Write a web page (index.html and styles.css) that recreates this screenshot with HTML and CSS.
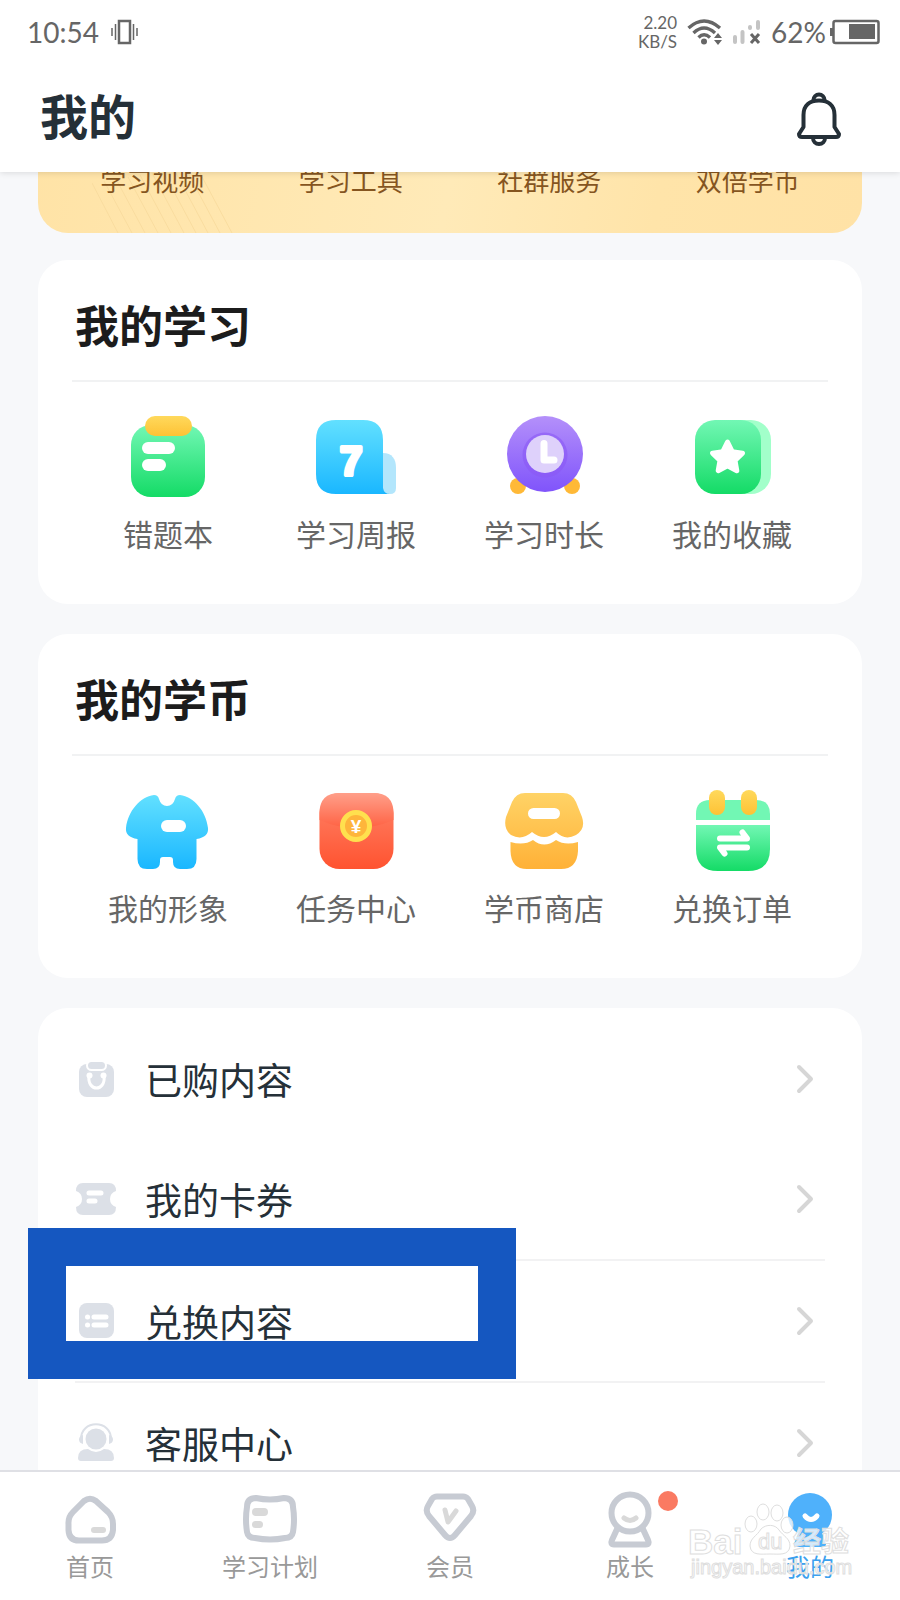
FILE: index.html
```html
<!DOCTYPE html>
<html lang="zh-CN">
<head>
<meta charset="utf-8">
<meta name="viewport" content="width=device-width, initial-scale=1">
<title>我的</title>
<link rel="stylesheet" href="styles.css">
</head>
<body>
<svg class="defs" aria-hidden="true">
  <defs>
    <linearGradient id="green" x1="0" y1="0" x2="0" y2="1"><stop offset="0" stop-color="#72f7b4"/><stop offset="1" stop-color="#14db66"/></linearGradient>
    <linearGradient id="blue" x1="0" y1="0" x2="0" y2="1"><stop offset="0" stop-color="#62e0ff"/><stop offset="1" stop-color="#1ab7ff"/></linearGradient>
    <linearGradient id="purple" x1="0" y1="0" x2="0" y2="1"><stop offset="0" stop-color="#b490fa"/><stop offset="1" stop-color="#8054fb"/></linearGradient>
    <linearGradient id="yellow" x1="0" y1="0" x2="0" y2="1"><stop offset="0" stop-color="#ffd95c"/><stop offset="1" stop-color="#fdc235"/></linearGradient>
    <linearGradient id="red" x1="0" y1="0" x2="0" y2="1"><stop offset="0" stop-color="#ff8469"/><stop offset="1" stop-color="#ff5330"/></linearGradient>
    <linearGradient id="flap" x1="0" y1="0" x2="0" y2="1"><stop offset="0" stop-color="#ff9f8a"/><stop offset="1" stop-color="#ff6243"/></linearGradient>
    <linearGradient id="amber" gradientUnits="userSpaceOnUse" x1="0" y1="11" x2="0" y2="87"><stop offset="0" stop-color="#ffd366"/><stop offset="1" stop-color="#ffb137"/></linearGradient>
  </defs>
</svg>

<header class="header">
  <div class="status">
    <span class="status-time">10:54</span>
    <svg class="vibrate" width="28" height="26" viewBox="0 0 28 26" fill="none" stroke="#666" aria-hidden="true"><rect x="8" y="2" width="11" height="22" stroke-width="2.500"/><path d="M4.500 5v16M22.500 5v16" stroke-width="1.500"/><path d="M1 9v8M26 9v8" stroke-width="1.500"/></svg>
    <span class="status-speed">2.20<br>KB/S</span>
    <svg class="wifi" width="36" height="26" viewBox="0 0 36 26" fill="none" stroke="#666" stroke-width="3.400" aria-hidden="true"><path d="M1.500 9Q17 -5 33 9M6.500 14Q17 4 28 14M11.500 18.500Q17 13 23 18.500"/><circle cx="17" cy="22.500" r="3" fill="#666" stroke="none"/><path d="M31 14l4 5h-8zM31 26l4-5h-8z" fill="#666" stroke="none"/></svg>
    <svg class="signal" width="28" height="26" viewBox="0 0 28 26" aria-hidden="true"><g stroke="#c4c4c4" stroke-width="4" stroke-linecap="round"><path d="M2 18v5M9.500 13v10M17 8v1M25 3v6"/></g><path d="M18 15l8 9M26 15l-8 9" stroke="#666" stroke-width="3"/></svg>
    <span class="status-percent">62%</span>
    <svg class="battery" width="50" height="26" viewBox="0 0 50 26" aria-hidden="true"><rect x="3.500" y="2" width="45" height="22" rx="2" fill="none" stroke="#666" stroke-width="2.500"/><path d="M0 9h3v8H0zM19 5h26v15H19z" fill="#666"/></svg>
  </div>
  <div class="titlebar">
    <h1 class="title">我的</h1>
    <button class="bell" type="button" aria-label="通知">
      <svg width="60" height="60" viewBox="0 0 60 60" fill="none" stroke="#253038" stroke-width="4" stroke-linejoin="round" aria-hidden="true"><path d="M14.500 38V26C14.500 16 21 11.500 30 11.500S45.500 16 45.500 26V38L50 45Q50 48 47 48H13Q10 48 10 45Z"/><path d="M24.500 11a5.500 5.500 0 0 1 11 0M24 49a6 6 0 0 0 12 0"/></svg>
    </button>
  </div>
</header>

<main class="content">
  <section class="vip">
    <svg class="vip-lines" width="160" height="60" viewBox="0 0 160 60" fill="none" stroke="#f9dc9f" aria-hidden="true"><path d="M0 10l26 50M12 8l28 52M24 6l29 54M36 4l30 56M48 2l31 58M60 0l32 60M72 0l32 60M84 0l32 60M96 0l32 60M108 0l32 60"/></svg>
    <span>学习视频</span><span>学习工具</span><span>社群服务</span><span>双倍学币</span>
  </section>

  <section class="card">
    <h2 class="card-title">我的学习</h2>
    <div class="grid">
      <a class="entry" href="#mistakes">
        <svg width="96" height="96" viewBox="0 0 96 96" aria-hidden="true"><rect x="11" y="17" width="74" height="72" rx="20" fill="url(#green)"/><rect x="25" y="8" width="47" height="20" rx="10" fill="url(#yellow)"/><rect x="22" y="34" width="33" height="12" rx="6" fill="#fff"/><rect x="22" y="51" width="24" height="12" rx="6" fill="#fff"/></svg>
        <span>错题本</span>
      </a>
      <a class="entry" href="#weekly">
        <svg width="96" height="96" viewBox="0 0 96 96" aria-hidden="true"><path d="M75 86V45C84 45 88 51 88 60V80Q88 86 82 86Z" fill="#b3e6fc"/><path d="M28 12H55Q75 12 75 32V80Q76 86 82 86H28Q8 86 8 66V32Q8 12 28 12Z" fill="url(#blue)"/><text x="43" y="67" text-anchor="middle" class="digit">7</text></svg>
        <span>学习周报</span>
      </a>
      <a class="entry" href="#duration">
        <svg width="96" height="96" viewBox="0 0 96 96" aria-hidden="true"><circle cx="22" cy="78" r="8" fill="#ffb937"/><circle cx="76" cy="78" r="8" fill="#ffb937"/><circle cx="49" cy="46" r="38" fill="url(#purple)"/><circle cx="49" cy="47" r="22.500" fill="#8a58f5" opacity=".6"/><circle cx="49" cy="46" r="19" fill="#ded1fb"/><path d="M48 35.500V52H58" fill="none" stroke="#fff" stroke-width="7" stroke-linecap="round" stroke-linejoin="round"/></svg>
        <span>学习时长</span>
      </a>
      <a class="entry" href="#favorites">
        <svg width="96" height="96" viewBox="0 0 96 96" aria-hidden="true"><rect x="21" y="12" width="66" height="74" rx="20" fill="#a2ffca"/><rect x="11" y="12" width="66" height="74" rx="20" fill="url(#green)"/><path d="M43.500 34l4.700 9.600 10.300 1.500-7.500 7.300 1.800 10.300-9.300-4.900-9.300 4.900 1.800-10.300-7.500-7.300 10.300-1.500z" fill="#fff" stroke="#fff" stroke-width="5" stroke-linejoin="round"/></svg>
        <span>我的收藏</span>
      </a>
    </div>
  </section>

  <section class="card">
    <h2 class="card-title">我的学币</h2>
    <div class="grid">
      <a class="entry" href="#avatar">
        <svg width="96" height="96" viewBox="0 0 96 96" aria-hidden="true"><path d="M34 13Q38 13 39 17Q41 24 47 24T55 17Q56 13 60 13C74 15 86 29 88 46Q89 55 76.500 57V77Q76.500 87 67 87H60Q53 87 53 80V78Q53 75 50 75H43Q40 75 40 78V80Q40 87 33 87H27Q17.500 87 17.500 77V57Q5 55 6 46C8 29 20 15 34 13Z" fill="url(#blue)"/><rect x="41" y="38" width="25" height="12" rx="6" fill="#fff"/></svg>
        <span>我的形象</span>
      </a>
      <a class="entry" href="#tasks">
        <svg width="96" height="96" viewBox="0 0 96 96" aria-hidden="true"><rect x="11.500" y="11" width="74" height="76" rx="20" fill="url(#red)"/><path d="M11.500 38V31Q11.500 11 31.500 11H65.500Q85.500 11 85.500 31V38Q48 54 11.500 38Z" fill="url(#flap)"/><circle cx="48" cy="44" r="13.500" fill="#feb53b" stroke="#ffe04e" stroke-width="5"/><text x="48" y="51" text-anchor="middle" class="yen">¥</text></svg>
        <span>任务中心</span>
      </a>
      <a class="entry" href="#shop">
        <svg width="96" height="96" viewBox="0 0 96 96" aria-hidden="true"><path d="M29 11H67Q76 11 80 20L86 35Q90 47 80 53Q69 59 60 50Q48 60 36 50Q26 59 15 53Q7 47 10 35L16 20Q20 11 29 11Z" fill="url(#amber)"/><path d="M14.500 60Q28 64 37 58Q48 67 60 58Q69 64 82 60V69Q81 87 65 87H31Q15 87 14.500 69Z" fill="url(#amber)"/><rect x="32" y="26" width="32" height="11" rx="5.500" fill="#fff"/></svg>
        <span>学币商店</span>
      </a>
      <a class="entry" href="#orders">
        <svg width="96" height="96" viewBox="0 0 96 96" aria-hidden="true"><path d="M12 38V32Q12 18 26 18H72Q86 18 86 32V38Z" fill="#72f7b4"/><path d="M12 43H86V67Q86 89 64 89H34Q12 89 12 67Z" fill="url(#green)"/><rect x="25" y="8" width="16" height="25" rx="8" fill="url(#yellow)"/><rect x="57" y="8" width="16" height="25" rx="8" fill="url(#yellow)"/><path d="M36 56.500H63L58.500 50.500M63 65.500H36L40.500 71.500" fill="none" stroke="#fff" stroke-width="6" stroke-linecap="round" stroke-linejoin="round"/></svg>
        <span>兑换订单</span>
      </a>
    </div>
  </section>

  <nav class="card list" aria-label="更多服务">
    <a class="row" href="#purchased">
      <svg width="42" height="42" viewBox="0 0 42 42" aria-hidden="true"><rect x="4" y="6" width="35" height="33" rx="8" fill="#dce0e7"/><rect x="12" y="3" width="19" height="9" rx="4.500" fill="#dce0e7" stroke="#fff" stroke-width="2"/><path d="M14 18C12 34 31 34 29 18" fill="none" stroke="#fff" stroke-width="3"/><circle cx="14.500" cy="17.500" r="3" fill="#fff"/><circle cx="28.500" cy="17.500" r="3" fill="#fff"/></svg>
      <span>已购内容</span>
      <svg class="chevron" width="18" height="30" viewBox="0 0 18 30" aria-hidden="true"><path d="M3 3L15 15L3 27"/></svg>
    </a>
    <a class="row ruled" href="#coupons">
      <svg width="42" height="42" viewBox="0 0 42 42" aria-hidden="true"><path d="M8 5H34Q41 5 41 13Q35 15 35 21T41 29Q41 37 34 37H8Q1 37 1 29Q7 27 7 21T1 13Q1 5 8 5Z" fill="#dce0e7"/><path d="M14 15H26M14 23H20" stroke="#fff" stroke-width="5" stroke-linecap="round"/></svg>
      <span>我的卡券</span>
      <svg class="chevron" width="18" height="30" viewBox="0 0 18 30" aria-hidden="true"><path d="M3 3L15 15L3 27"/></svg>
    </a>
    <a class="row ruled marked" href="#redeem">
      <svg width="42" height="42" viewBox="0 0 42 42" aria-hidden="true"><rect x="4" y="3" width="35" height="35" rx="8" fill="#dce0e7"/><path d="M19 17H31M19 25H31M12.500 17h.1M12.500 25h.1" stroke="#fff" stroke-width="5" stroke-linecap="round"/></svg>
      <span>兑换内容</span>
      <svg class="chevron" width="18" height="30" viewBox="0 0 18 30" aria-hidden="true"><path d="M3 3L15 15L3 27"/></svg>
    </a>
    <a class="row" href="#support">
      <svg width="42" height="42" viewBox="0 0 42 42" aria-hidden="true"><circle cx="21" cy="17" r="10.500" fill="#dce0e7"/><path d="M6 18C5 -3 37 -3 36 18" fill="none" stroke="#dce0e7" stroke-width="2"/><path d="M8 13v9Q4 21 4 17.500T8 13ZM34 13v9Q38 21 38 17.500T34 13ZM3 36Q3 27 13 27Q21 33 29 27Q39 27 39 36Q39 39 36 39H6Q3 39 3 36Z" fill="#dce0e7"/></svg>
      <span>客服中心</span>
      <svg class="chevron" width="18" height="30" viewBox="0 0 18 30" aria-hidden="true"><path d="M3 3L15 15L3 27"/></svg>
    </a>
  </nav>
</main>

<footer class="footer">
  <nav class="tabs" aria-label="主导航">
    <a class="tab" href="#home">
      <svg width="60" height="60" viewBox="0 0 60 60" fill="none" aria-hidden="true"><path d="M24 11Q30 6.500 36 11L48 22Q53 27 53 34V40Q52 50.500 42 50.500H19Q9 50.500 8.500 40V34Q8 27 13 22Z" stroke="#c7cbd3" stroke-width="6"/><rect x="31" y="37" width="15" height="6" rx="3" fill="#d9d9d9"/></svg>
      <span>首页</span>
    </a>
    <a class="tab" href="#plan">
      <svg width="60" height="60" viewBox="0 0 60 60" fill="none" aria-hidden="true"><path d="M16 8Q30 11 44 8Q53 8 53 17Q55 29 53 42Q52 48 45 48Q30 51 15 48Q8 48 7 42Q5 29 7 17Q7 8 16 8Z" stroke="#c7cbd3" stroke-width="6"/><rect x="12" y="18" width="16" height="8" rx="4" fill="#d9d9d9"/><rect x="12" y="31" width="11" height="7" rx="3.500" fill="#d9d9d9"/></svg>
      <span>学习计划</span>
    </a>
    <a class="tab" href="#member">
      <svg width="60" height="60" viewBox="0 0 60 60" fill="none" aria-hidden="true"><path d="M17 6.500H43Q46 6.500 48 9L52 16Q55 21 51 26L35 45Q30 51 25 45L9 26Q5 21 8 16L12 9Q14 6.500 17 6.500Z" stroke="#c7cbd3" stroke-width="6"/><path d="M25 20L28 32L36 21" stroke="#d9d9d9" stroke-width="5" stroke-linecap="round" stroke-linejoin="round"/></svg>
      <span>会员</span>
    </a>
    <a class="tab" href="#growth">
      <span class="tab-icon">
        <svg width="60" height="60" viewBox="0 0 60 60" fill="none" aria-hidden="true"><path d="M18 37L12 50Q10 54.500 14 54.500H46Q50 54.500 48 50L42 37" stroke="#c7cbd3" stroke-width="6"/><circle cx="30" cy="23" r="18.500" stroke="#c7cbd3" stroke-width="6"/><path d="M24 28Q30 33 36 28" stroke="#d9d9d9" stroke-width="5" stroke-linecap="round"/></svg>
        <i class="dot"></i>
      </span>
      <span>成长</span>
    </a>
    <a class="tab active" href="#me" aria-current="page">
      <svg width="60" height="60" viewBox="0 0 60 60" aria-hidden="true"><path d="M19 40H41L46 54Q46 57 43 57H17Q14 57 14 54Z" fill="#4fb1fb"/><circle cx="30" cy="25" r="22" fill="#4fb1fb"/><path d="M25 26Q31 33 37 26" fill="none" stroke="#fff" stroke-width="5" stroke-linecap="round"/></svg>
      <span>我的</span>
    </a>
  </nav>
  <svg class="watermark" width="170" height="84" viewBox="0 0 170 84" role="img" aria-label="Baidu 经验">
    <text x="2" y="54" class="wm-brand">Bai</text>
    <ellipse cx="65" cy="24" rx="6" ry="8"/><ellipse cx="77" cy="12" rx="6" ry="8"/><ellipse cx="91" cy="13" rx="6" ry="8"/><ellipse cx="101" cy="25" rx="6" ry="8"/>
    <path d="M75 29C80 24 89 24 93 30C97 36 104 38 104 46C103 56 93 54 84 54S65 56 64 46C64 38 71 36 75 29Z"/>
    <text x="72" y="49" class="wm-du">du</text>
    <text x="107" y="52" class="wm-cn">经验</text>
    <text x="5" y="74" class="wm-url">jingyan.baidu.com</text>
  </svg>
</footer>
</body>
</html>
```
FILE: styles.css
```css
*,
*::before,
*::after {
  box-sizing: border-box;
}

body {
  margin: 0;
  height: 100vh;
  display: flex;
  flex-direction: column;
  background: #f7f8fa;
  color: #253038;
  font-family: "Liberation Sans", "Noto Sans CJK SC", sans-serif;
}

a {
  color: inherit;
  text-decoration: none;
}

svg {
  display: block;
  flex: none;
}

.defs {
  position: absolute;
  width: 0;
  height: 0;
}

/* Header */
.header {
  position: relative;
  z-index: 1;
  flex: none;
  padding-bottom: 22px;
  background: #fff;
  box-shadow: 0 1px 6px rgba(0, 0, 0, 0.12);
}

.status {
  display: flex;
  align-items: center;
  height: 64px;
  padding: 0 20px 0 27px;
  color: #666;
  font-family: Lato, sans-serif;
  font-size: 28px;
}

.vibrate {
  margin: 0 auto 0 12px;
}

.status-speed {
  margin-right: 10px;
  font-size: 17px;
  line-height: 19px;
  text-align: right;
}

.wifi,
.signal {
  margin-right: 10px;
}

.status-percent {
  margin-right: 4px;
}

.titlebar {
  display: flex;
  align-items: center;
  justify-content: space-between;
  height: 86px;
  padding: 24px 51px 0 40px;
}

.title {
  margin: 0;
  font-size: 48px;
  line-height: 60px;
}

.bell {
  padding: 0;
  border: 0;
  background: none;
}

/* Scrolling content */
.content {
  flex: 1;
  min-height: 0;
  overflow-y: auto;
  scrollbar-width: none;
  padding: 0 38px;
}

.vip {
  position: relative;
  display: grid;
  grid-template-columns: repeat(4, 1fr);
  margin: -42px 0 27px;
  padding: 32px 15px 31px;
  border-radius: 30px;
  background: linear-gradient(100deg, #ffe3a6, #ffeab8 50%, #ffe4a9 75%, #ffe2a6);
  color: #85551f;
  font-size: 26px;
  line-height: 40px;
  text-align: center;
}

.vip-lines {
  position: absolute;
  left: 54px;
  bottom: 0;
}

.vip span {
  position: relative;
}

.card {
  margin-bottom: 30px;
  padding: 0 34px;
  border-radius: 30px;
  background: #fff;
}

.card-title {
  margin: 0;
  padding: 38px 3px 22px;
  border-bottom: 2px solid #f1f2f3;
  color: #1c1c1c;
  font-size: 44px;
  line-height: 60px;
}

.grid {
  display: grid;
  grid-template-columns: repeat(4, 1fr);
  padding: 26px 2px 48px;
}

.entry {
  display: flex;
  flex-direction: column;
  align-items: center;
  gap: 12px;
  color: #666;
  font-size: 30px;
  line-height: 40px;
}

.digit {
  fill: #fff;
  stroke: #fff;
  stroke-width: 4px;
  stroke-linejoin: round;
  font: bold 40px "Liberation Sans", sans-serif;
}

.yen {
  fill: #fff;
  font: bold 19px "Liberation Sans", sans-serif;
}

/* Service list */
.list {
  padding: 11px 37px;
}

.row {
  position: relative;
  display: flex;
  align-items: center;
  gap: 28px;
  min-height: 120px;
  font-size: 37px;
}

.row > span {
  flex: 1;
}

.ruled {
  min-height: 122px;
  border-bottom: 2px solid #f2f2f3;
}

.chevron {
  margin-right: 11px;
  fill: none;
  stroke: #d6d6d6;
  stroke-width: 4px;
  stroke-linecap: round;
  stroke-linejoin: round;
}

.marked::after {
  content: "";
  position: absolute;
  top: -33px;
  left: -47px;
  width: 488px;
  height: 151px;
  border: 38px solid #1557c0;
}

/* Tab bar */
.footer {
  position: relative;
  flex: none;
  background: #fff;
  border-top: 2px solid #dfe0e5;
}

.tabs {
  display: grid;
  grid-template-columns: repeat(5, 1fr);
  padding: 18px 0 16px;
}

.tab {
  display: flex;
  flex-direction: column;
  align-items: center;
  gap: 2px;
  color: #999;
  font-size: 24px;
  line-height: 32px;
}

.tab-icon {
  position: relative;
}

.dot {
  position: absolute;
  top: 1px;
  right: -18px;
  width: 20px;
  height: 20px;
  border-radius: 50%;
  background: #fa7a62;
}

.active {
  color: #3ba0ee;
}

.watermark {
  position: absolute;
  right: 44px;
  bottom: 16px;
  fill: rgba(255, 255, 255, 0.75);
  stroke: #dedede;
  stroke-width: 1px;
}

.wm-brand {
  font: bold 35px "Liberation Sans", sans-serif;
}

.wm-du {
  font: 22px "Liberation Sans", sans-serif;
}

.wm-cn {
  font: bold 28px "Noto Sans CJK SC", sans-serif;
}

.wm-url {
  font: 20px "Liberation Sans", sans-serif;
}
```
